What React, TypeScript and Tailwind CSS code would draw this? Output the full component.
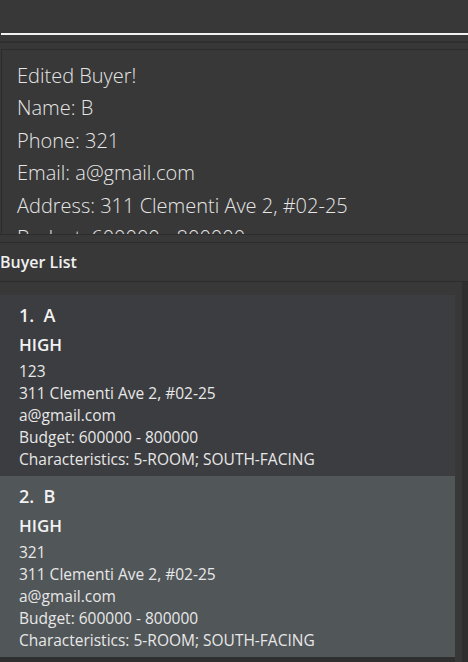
import React from "react";

const buyers = [
  { idx: 1, name: "A", priority: "HIGH", phone: "123", bg: "bg-[#3c3d40]" },
  { idx: 2, name: "B", priority: "HIGH", phone: "321", bg: "bg-[#515659]" },
];

export default function App() {
  const sans = { fontFamily: '"Open Sans", "Noto Sans", sans-serif' };
  return (
    <div className="w-[468px] h-[662px] bg-[#383838] overflow-hidden flex flex-col" style={sans}>
      {/* command box */}
      <div className="h-[33px] bg-[#383838] shrink-0" />
      <div className="h-[2px] ml-px bg-[#f2f2f2] shrink-0" />
      <div className="h-[6px] shrink-0" />
      <div className="h-[2px] bg-[#2f2f2f] shrink-0" />
      <div className="h-[6px] shrink-0" />
      {/* result display */}
      <div className="h-[185px] shrink-0 ml-px border-t border-l border-[#2c2c2c] bg-[#383838] overflow-hidden pl-[15px] pt-[10px] text-[20px] font-light leading-[32.4px] text-[#e6e6e6]">
        <div>Edited Buyer!</div>
        <div>Name: B</div>
        <div>Phone: 321</div>
        <div>Email: a@gmail.com</div>
        <div>Address: 311 Clementi Ave 2, #02-25</div>
        <div>Budget: 600000 - 800000</div>
      </div>
      <div className="h-px bg-[#2c2c2c] shrink-0" />
      <div className="h-[7px] shrink-0" />
      <div className="h-px bg-[#2c2c2c] shrink-0" />
      {/* header */}
      <div className="h-[38px] shrink-0 flex items-center text-[16px] font-semibold text-[#f0f0f0]">
        Buyer List
      </div>
      <div className="h-px bg-[#2c2c2c] shrink-0" />
      {/* list */}
      <div className="flex flex-1 min-h-0">
        <div className="w-[455px] flex flex-col pt-[13px]">
          {buyers.map((b) => (
            <div key={b.idx} className={`${b.bg} h-[181px] shrink-0 pl-[19px] pt-[7px] text-[#e8e8e8]`}>
              <div className="text-[18px] font-semibold leading-[27px] text-[#f2f2f2]">
                {b.idx}.&nbsp;&nbsp;{b.name}
              </div>
              <div className="text-[17px] font-semibold leading-[31px] text-[#f2f2f2]">{b.priority}</div>
              <div className="text-[15.5px] leading-[22px]">
                <div>{b.phone}</div>
                <div>311 Clementi Ave 2, #02-25</div>
                <div>a@gmail.com</div>
                <div>Budget: 600000 - 800000</div>
                <div>Characteristics: 5-ROOM; SOUTH-FACING</div>
              </div>
            </div>
          ))}
          <div className="flex-1 bg-[#2f2f2f]" />
        </div>
        <div className="w-[7px] bg-[#383838]" />
        <div className="w-[6px] bg-[#2f2f2f]" />
      </div>
    </div>
  );
}
